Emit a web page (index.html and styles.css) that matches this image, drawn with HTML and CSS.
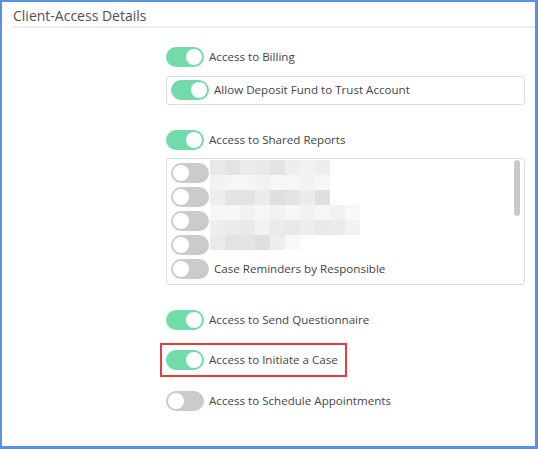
FILE: index.html
```html
<!DOCTYPE html>
<html>
<head>
<meta charset="utf-8">
<link rel="stylesheet" href="styles.css">
</head>
<body>
<div class="panel">
  <div class="title">Client-Access Details</div>
  <div class="content">
    <div class="row row-billing"><span class="tg on"></span><span class="lbl">Access to Billing</span></div>
    <div class="box deposit"><div class="row"><span class="tg on"></span><span class="lbl lbl2">Allow Deposit Fund to Trust Account</span></div></div>
    <div class="row row-shared"><span class="tg on"></span><span class="lbl">Access to Shared Reports</span></div>
    <div class="box list">
      <div class="row"><span class="tg"></span></div>
      <div class="row"><span class="tg"></span></div>
      <div class="row"><span class="tg"></span></div>
      <div class="row"><span class="tg"></span></div>
      <div class="row"><span class="tg"></span><span class="lbl lbl2">Case Reminders by Responsible</span></div>
      <div class="mosaic">
        <div class="mr"><i class="a"></i><i class="b"></i><i class="c"></i><i class="a"></i><i class="b"></i><i class="d"></i><i class="e"></i><i class="d"></i></div>
        <div class="mr"><i class="e"></i><i class="f"></i><i class="f"></i><i class="e"></i><i class="f"></i><i class="f"></i><i class="e"></i><i class="f"></i></div>
        <div class="mr"><i class="d"></i><i class="b"></i><i class="b"></i><i class="c"></i><i class="g"></i><i class="b"></i><i class="c"></i><i class="g"></i></div>
        <div class="mr"><i class="f"></i><i class="f"></i><i class="e"></i><i class="f"></i><i class="e"></i><i class="f"></i><i class="e"></i><i class="f"></i><i class="e"></i><i class="h"></i></div>
        <div class="mr"><i class="d"></i><i class="c"></i><i class="a"></i><i class="e"></i><i class="c"></i><i class="a"></i><i class="d"></i><i class="a"></i><i class="c"></i><i class="e"></i></div>
        <div class="mr"><i class="c"></i><i class="b"></i><i class="b"></i><i class="g"></i><i class="d"></i><i class="h"></i></div>
      </div>
      <div class="scrollbar"></div>
    </div>
    <div class="row row-quest"><span class="tg on"></span><span class="lbl">Access to Send Questionnaire</span></div>
    <div class="highlight"><div class="row"><span class="tg on"></span><span class="lbl">Access to Initiate a Case</span></div></div>
    <div class="row row-sched"><span class="tg"></span><span class="lbl">Access to Schedule Appointments</span></div>
  </div>
</div>
</body>
</html>
```

FILE: styles.css
```css
* { box-sizing: border-box; }
html, body { margin: 0; padding: 0; background: #fff; }
body { font-family: "Open Sans", "Liberation Sans", sans-serif; color: #444; }

.panel {
  width: 538px;
  height: 449px;
  border: 2px solid #5b93da;
  border-right-width: 3px;
  border-bottom-width: 3px;
  background: #fff;
  overflow: hidden;
}

.title {
  margin-left: 11px;
  padding: 4px 0 1px 0;
  font-size: 14px;
  line-height: 19px;
  color: #505050;
  border-bottom: 2px solid #ececec;
}

.content {
  display: flex;
  flex-direction: column;
  align-items: stretch;
  margin-left: 164px;
  margin-right: 10px;
  padding-top: 19px;
}

.row {
  display: flex;
  align-items: center;
  height: 20px;
}

.tg {
  position: relative;
  flex: none;
  width: 38px;
  height: 20px;
  border-radius: 10px;
  background: #cbcbcb;
}
.tg::after {
  content: "";
  position: absolute;
  top: 2px;
  left: 2px;
  width: 16px;
  height: 16px;
  border-radius: 50%;
  background: #fff;
}
.tg.on { background: #72dbac; }
.tg.on::after { left: auto; right: 2px; }

.lbl {
  margin-left: 5px;
  font-size: 11.6px;
  line-height: 16px;
  color: #454545;
  white-space: nowrap;
}

.box {
  border: 1px solid #dcdcdc;
  border-radius: 3px;
}

.deposit {
  margin-top: 9px;
  padding: 3px 4px 4px 4px;
}

.row-shared { margin-top: 25px; }

.list {
  position: relative;
  margin-top: 8px;
  padding: 4px 4px 5px 4px;
  display: flex;
  flex-direction: column;
  gap: 4px;
}

.mosaic {
  position: absolute;
  left: 43px;
  top: 1px;
  display: flex;
  flex-direction: column;
}
.mr { display: flex; }
.mr i { display: block; width: 15px; height: 15px; }
.mr .a { background: #e9e9ea; }
.mr .b { background: #e3e3e3; }
.mr .c { background: #ebebec; }
.mr .d { background: #eeeeee; }
.mr .e { background: #f2f2f2; }
.mr .f { background: #f6f6f6; }
.mr .g { background: #dfdfdf; }
.mr .h { background: #f8f8f8; }

.scrollbar {
  position: absolute;
  right: 4px;
  top: 1px;
  width: 6px;
  height: 56px;
  border-radius: 3px;
  background: #c9c9c9;
}

.row-quest { margin-top: 25px; }

.highlight {
  align-self: flex-start;
  margin-top: 13px;
  margin-left: -6px;
  border: 2px solid #e2403f;
  padding: 5px 7px 5px 4px;
}

.row-sched { margin-top: 14px; }
```
